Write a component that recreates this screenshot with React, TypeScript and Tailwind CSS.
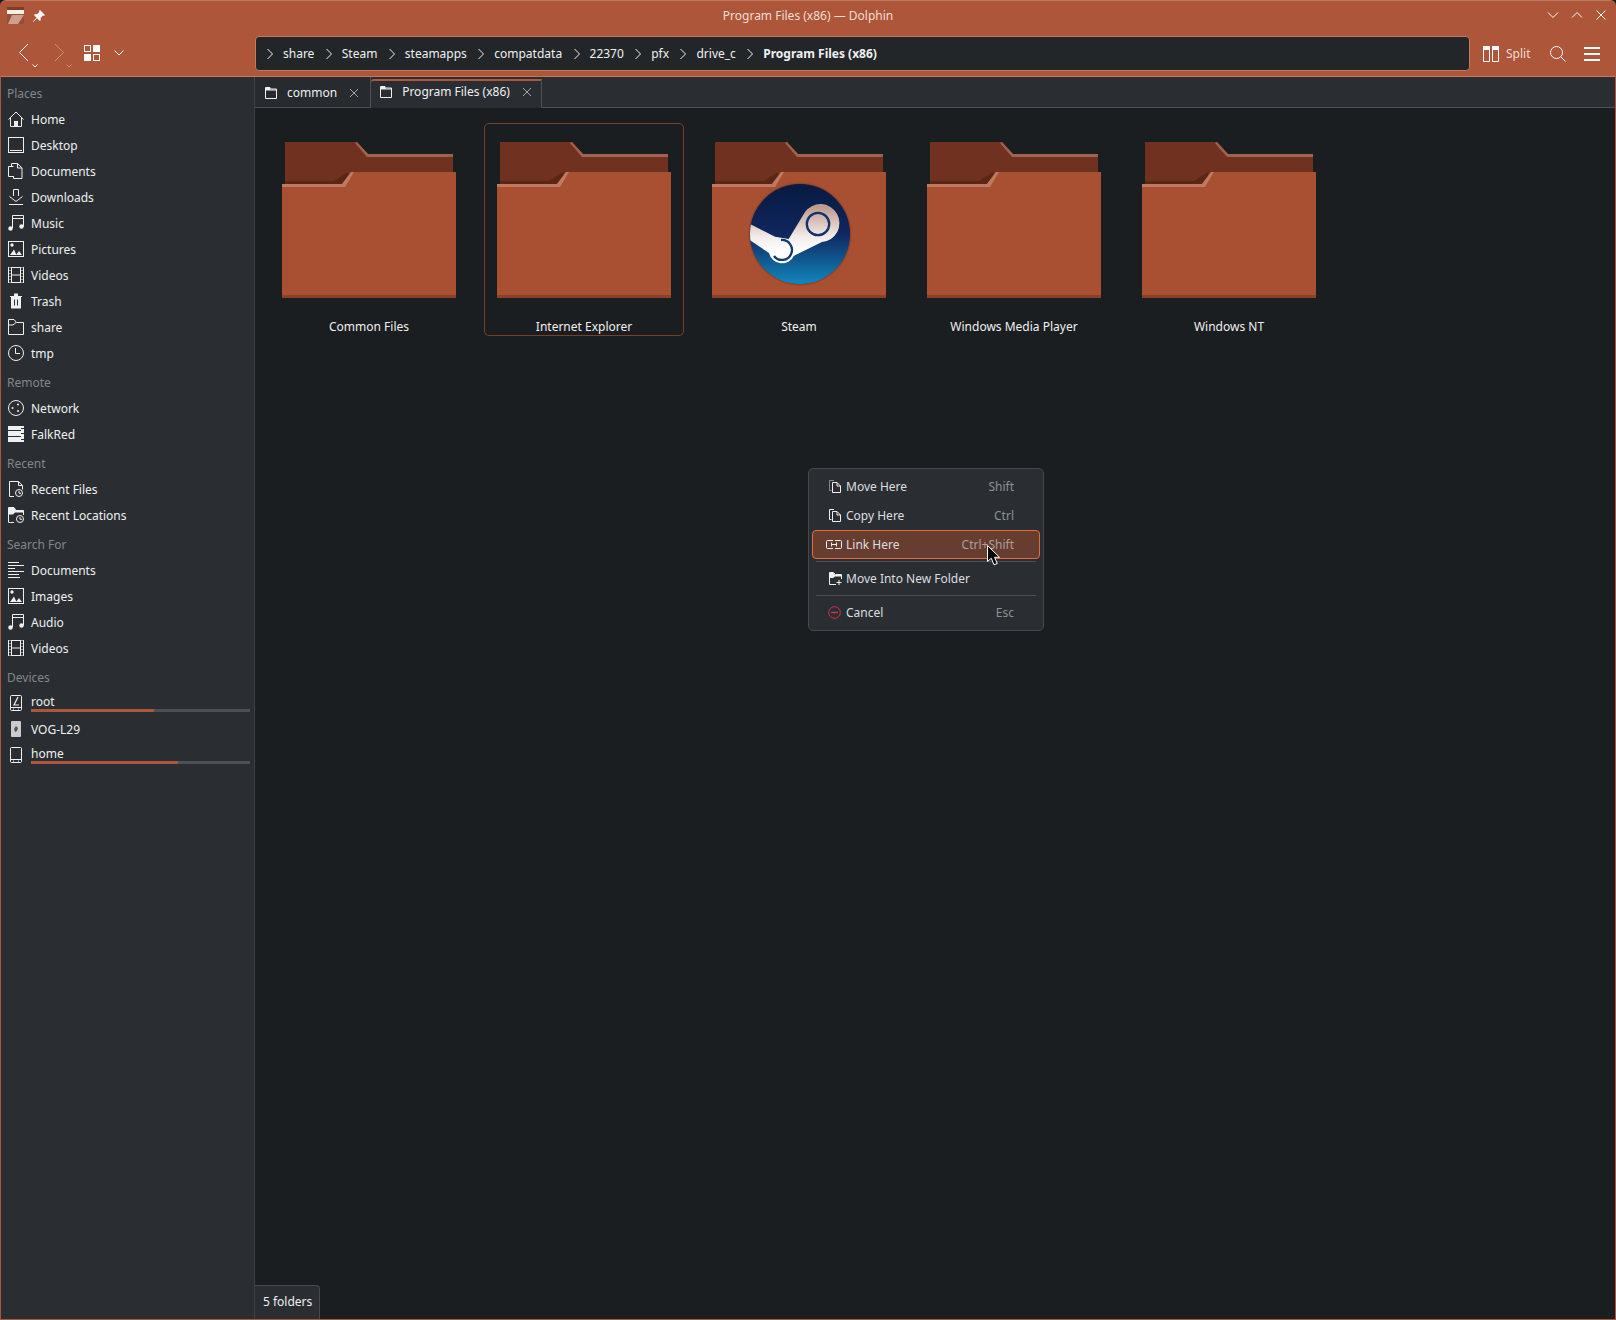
import React from "react";

const Svg = ({ size = 16, className = "", children }: { size?: number; className?: string; children: React.ReactNode }) => (
  <svg width={size} height={size} viewBox="0 0 16 16" fill="none" stroke="currentColor" strokeWidth="1" className={`shrink-0 ${className}`}>
    {children}
  </svg>
);

const HomeIcon = () => (
  <Svg>
    <path d="M0.5 8.5L8 1L15.5 8.5M2.5 7V15.5H13.5V7" />
    <rect x="6.5" y="10.5" width="3" height="5" fill="currentColor" />
  </Svg>
);
const DesktopIcon = () => (
  <Svg>
    <rect x="0.5" y="0.5" width="15" height="15" />
    <path d="M2 13.5H14" />
  </Svg>
);
const DocumentsIcon = () => (
  <Svg>
    <path d="M5.5 3.5H0.5V13.5H5.5" />
    <path d="M3.5 0.5H9.5L14 5V15.5H5.5V13M3.5 0.5V3.5M9.5 0.5V5H14" />
  </Svg>
);
const DownloadsIcon = () => (
  <Svg>
    <path d="M5.5 7V0.5H10.5V7M1.5 7.5L8 12.5L14.5 7.5M1 15.5H15" />
  </Svg>
);
const MusicIcon = () => (
  <Svg>
    <path d="M4.5 13V0.5H15.5V11.5M4.5 3.5H15.5" />
    <circle cx="2.5" cy="13.5" r="2.2" fill="currentColor" stroke="none" />
    <circle cx="13.5" cy="11.5" r="2.2" fill="currentColor" stroke="none" />
  </Svg>
);
const PicturesIcon = () => (
  <Svg>
    <rect x="0.5" y="0.5" width="15" height="15" />
    <circle cx="4" cy="4" r="1.7" fill="currentColor" stroke="none" />
    <path d="M2 14L6 8.5L8.5 14ZM8 14L11 10L14 14Z" fill="currentColor" stroke="none" />
  </Svg>
);
const VideosIcon = () => (
  <Svg>
    <rect x="3.5" y="0.5" width="9" height="15" />
    <path d="M3.5 8H12.5M0.5 0V16M15.5 0V16" />
    <path d="M0 0.5H3M0 3.5H3M0 6.5H3M0 9.5H3M0 12.5H3M0 15.5H3M13 0.5H16M13 3.5H16M13 6.5H16M13 9.5H16M13 12.5H16M13 15.5H16" strokeOpacity="0.5" />
  </Svg>
);
const TrashIcon = () => (
  <Svg>
    <path d="M2 3H6V0.5H10V3H14V4H13V15.5H3V4H2Z" fill="currentColor" stroke="none" />
    <path d="M6.5 6.5V12.5M9.5 6.5V12.5" stroke="#2a2e32" />
  </Svg>
);
const FolderIcon = () => (
  <Svg>
    <path d="M0.5 15.5V0.5H6L8.5 3.5H15.5V15.5Z" />
    <path d="M0.5 6L5 6L8 3.5" />
  </Svg>
);
const TabFolderIcon = () => (
  <svg width="12" height="12" viewBox="0 0 12 12" fill="none" stroke="#eff0f1" className="shrink-0">
    <path d="M0.500 11.500V0.500H5L6.500 2H11.500V11.500Z" />
    <path d="M1 1H5L6 2.500H11V3.500H1Z" fill="#eff0f1" stroke="none" />
  </svg>
);
const ClockIcon = () => (
  <Svg>
    <circle cx="8" cy="8" r="7.5" />
    <path d="M7.5 3V8.5H12" />
  </Svg>
);
const NetworkIcon = () => (
  <Svg>
    <circle cx="8" cy="8" r="7.5" />
    <circle cx="4.5" cy="8" r="1" fill="currentColor" stroke="none" />
    <circle cx="10" cy="4.5" r="1" fill="currentColor" stroke="none" />
    <circle cx="10" cy="11" r="1" fill="currentColor" stroke="none" />
  </Svg>
);
const ServerIcon = () => (
  <Svg>
    <rect x="0" y="0" width="16" height="16" fill="currentColor" stroke="none" />
    <path d="M0 4.5H13M0 10.5H13M13 2.5H16M13 7.5H16M13 13.5H16" stroke="#2a2e32" />
  </Svg>
);
const RecentFilesIcon = () => (
  <Svg>
    <path d="M6 15.5H1.5V0.5H10.5L14.5 4.5V8.5M10.5 0.5V4.5H14.5" />
    <circle cx="11" cy="12" r="3.5" fill="#2a2e32" />
    <path d="M11 10V12.3H13" />
  </Svg>
);
const RecentLocationsIcon = () => (
  <Svg>
    <path d="M0.5 15.5V0.5H6L8 3.5H15.5V8M6 15.5H0.5" />
    <path d="M1 1H6L8 3.5H15.5V5.5H7L5 7.5H1Z" fill="currentColor" stroke="none" />
    <circle cx="12" cy="12" r="3.5" fill="#2a2e32" />
    <path d="M12 10V12.3H14" />
  </Svg>
);
const TextIcon = () => (
  <Svg>
    <path d="M0 0.5H11M0 3.5H16M0 6.5H7M0 9.5H16M0 12.5H11M0 15.5H12" />
  </Svg>
);
const DriveIcon = ({ slash = false }: { slash?: boolean }) => (
  <Svg>
    <rect x="2.5" y="0.5" width="11" height="15" rx="1" />
    <path d="M3 12.5H13" />
    {slash && <path d="M10 2L6 10H11" strokeWidth="1.2" />}
    <path d="M5 14H6M10 14H11" />
  </Svg>
);
const PhoneIcon = () => (
  <svg width="16" height="16" viewBox="0 0 16 16" className="shrink-0">
    <rect x="3" y="0" width="10" height="16" rx="1" fill="#c9cbcc" />
    <path d="M8 5L10 7L9 10L7 11L6 8Z" fill="#555" />
  </svg>
);

const SidebarHeader = ({ title }: { title: string }) => (
  <div className="pt-[5px] h-[29px] flex items-center pl-[6px] text-[#81878c]">{title}</div>
);

const SidebarRow = ({ icon, label }: { icon: React.ReactNode; label: string }) => (
  <div className="h-[26px] flex items-center pl-[7px] gap-[7px] text-[#eff0f1]">
    {icon}
    <span className="pt-[2px]">{label}</span>
  </div>
);

const DeviceRow = ({ icon, label, used }: { icon: React.ReactNode; label: string; used: string }) => (
  <div className="h-[26px] flex items-center pl-[7px] gap-[7px] text-[#eff0f1]">
    {icon}
    <div className="flex-1 pr-[4px] mb-[2px]">
      <div className="h-[17px] leading-[17px]">{label}</div>
      <div className="h-[3px] bg-[#4d5054] -mt-[1px]">
        <div className={`h-full bg-[#ad5639] ${used}`} />
      </div>
    </div>
  </div>
);

const SteamBadge = () => (
  <svg width="102" height="102" viewBox="0 0 102 102" className="absolute left-[37px] top-[41px] drop-shadow-[0_0_1px_rgba(0,0,0,0.5)]">
    <defs>
      <linearGradient id="steamBg" x1="0" y1="0" x2="0" y2="1">
        <stop offset="0" stopColor="#071a40" />
        <stop offset="0.5" stopColor="#10265e" />
        <stop offset="1" stopColor="#1088bf" />
      </linearGradient>
      <linearGradient id="steamFg" x1="0" y1="0" x2="0" y2="1">
        <stop offset="0.05" stopColor="#bf9a8e" />
        <stop offset="0.55" stopColor="#f2ecea" />
        <stop offset="0.8" stopColor="#ffffff" />
      </linearGradient>
      <clipPath id="steamClip">
        <circle cx="50" cy="50" r="50" />
      </clipPath>
    </defs>
    <circle cx="51" cy="51" r="50" fill="url(#steamBg)" />
    <g clipPath="url(#steamClip)" transform="translate(1 1)">
      <path
        d="M-2 39L25 52.700L38.700 55L55 28A19 19 0 1 1 72 58L44 71.700A13.300 13.300 0 0 1 19 69L-2 55Z"
        fill="url(#steamFg)"
      />
      <circle cx="68" cy="40" r="11.200" fill="none" stroke="#10306e" strokeWidth="2.300" />
      <path d="M31 56A10 10 0 1 1 24 72" fill="none" stroke="#10396f" strokeWidth="2.300" />
    </g>
  </svg>
);

const FolderBig = () => (
  <svg width="174" height="156" viewBox="0 0 174 156" className="block">
    <path d="M3 0H75L86 12H171V60H3Z" fill="#713120" />
    <path d="M75 0L86 12H171V15H85L73 1Z" fill="#a0624e" />
    <path d="M3 39H52L66 30V42H3Z" fill="#5a2616" />
    <path d="M0 42H60L69 30H174V156H0Z" fill="#a95032" />
    <path d="M0 42H60L69 30H72L63 45H0Z" fill="#c07a62" />
    <rect x="0" y="153" width="174" height="3" fill="#8b4028" />
  </svg>
);

const FileItem = ({ name, selected, steam }: { name: string; selected?: boolean; steam?: boolean }) => (
  <div
    className={`w-[200px] h-[213px] rounded-[5px] border flex flex-col items-center ${
      selected ? "border-[#78402c]" : "border-transparent"
    }`}
  >
    <div className="relative mt-[18px]">
      <FolderBig />
      {steam && <SteamBadge />}
    </div>
    <div className="mt-[19px] text-[#eff0f1] leading-[20px]">{name}</div>
  </div>
);

const Crumb = ({ label, bold }: { label: string; bold?: boolean }) => (
  <div className="flex items-center">
    <svg width="10" height="12" viewBox="0 0 10 12" fill="none" stroke="#eff0f1" className="mr-[8px]">
      <path d="M2.500 1L7.500 6L2.500 11" />
    </svg>
    <span className={`mr-[9.4px] ${bold ? "font-bold" : ""}`}>{label}</span>
  </div>
);

const Tab = ({ label, active }: { label: string; active?: boolean }) => (
  <div
    className={`flex items-center border-r border-r-[#4d5054] ${
      active
        ? "pl-[9px] mt-[2px] h-[29px] pb-[6px] rounded-tl-[3px] border-t-2 border-t-[#ad5639] bg-[#2a2e32]"
        : "h-[31px] pl-[10px] border-b border-b-[#4d5054] bg-[#272a2e] pt-[1px]"
    }`}
  >
    <TabFolderIcon />
    <span className="ml-[10px] text-[#eff0f1]">{label}</span>
    <svg
      width="10"
      height="10"
      viewBox="0 0 10 10"
      stroke="#a3a6a8"
      className={active ? "ml-[12px] mr-[9px]" : "ml-[12px] mr-[11px]"}
    >
      <path d="M1 1L9 9M9 1L1 9" />
    </svg>
  </div>
);

const MenuRow = ({
  icon,
  label,
  shortcut,
  active,
}: {
  icon: React.ReactNode;
  label: string;
  shortcut?: string;
  active?: boolean;
}) => (
  <div
    className={`h-[29px] mx-[3px] flex items-center rounded-[4px] border pl-[14px] pr-[25px] ${
      active ? "bg-[#673d30] border-[#e46c43]" : "border-transparent"
    }`}
  >
    <div className="w-[16px] flex justify-center">{icon}</div>
    <span className="ml-[3px] text-[#dcdee0]">{label}</span>
    <span className={`ml-auto ${active ? "text-[#a99f9b]" : "text-[#8d9195]"}`}>{shortcut}</span>
  </div>
);

const ContextMenu = () => (
  <div className="absolute left-[808px] top-[468px] w-[236px] h-[163px] py-[3px] rounded-[5px] border border-[#45484c] bg-[#2a2e32] text-[#dcdee0]">
    <MenuRow
      label="Move Here"
      shortcut="Shift"
      icon={
        <svg width="12" height="13" viewBox="0 0 12 13" fill="none" stroke="#eff0f1">
          <path d="M2.500 10.500H0.500V0.500H5" strokeOpacity="0.45" />
          <path d="M3.500 2.500H8L11.500 6V12.500H3.500Z" />
          <path d="M8 2.500V6H11.500" />
        </svg>
      }
    />
    <MenuRow
      label="Copy Here"
      shortcut="Ctrl"
      icon={
        <svg width="12" height="13" viewBox="0 0 12 13" fill="none" stroke="#eff0f1">
          <path d="M2.500 10.500H0.500V0.500H5" />
          <path d="M3.500 2.500H8L11.500 6V12.500H3.500Z" />
          <path d="M8 2.500V6H11.500" />
        </svg>
      }
    />
    <MenuRow
      active
      label="Link Here"
      shortcut="Ctrl+Shift"
      icon={
        <svg width="16" height="9" viewBox="0 0 16 9" fill="none" stroke="#eff0f1" className="-ml-[2px]">
          <path d="M7 0.500H1.500A1 1 0 0 0 0.500 1.500V7.500A1 1 0 0 0 1.500 8.500H7M9 0.500H14.500A1 1 0 0 1 15.500 1.500V7.500A1 1 0 0 1 14.500 8.500H9" />
          <path d="M5.500 2.500V6.500M10.500 2.500V6.500M5.500 4.500H10.500" />
        </svg>
      }
    />
    <div className="h-[1px] bg-[#4d5054] mx-[7px] my-[2px]" />
    <MenuRow
      label="Move Into New Folder"
      icon={
        <svg width="13" height="13" viewBox="0 0 13 13" fill="none" stroke="#eff0f1">
          <path d="M7 12.500H0.500V0.500H4.500L6.500 2.500H12.500V7" />
          <path d="M1 1H4.500L6.500 3H12.500V4.500H6L4 6H1Z" fill="#eff0f1" stroke="none" />
          <path d="M10 8V13M7.500 10.500H12.500" />
        </svg>
      }
    />
    <div className="h-[1px] bg-[#4d5054] mx-[7px] my-[2px]" />
    <MenuRow
      label="Cancel"
      shortcut="Esc"
      icon={
        <svg width="13" height="13" viewBox="0 0 13 13" fill="none" stroke="#d0324a" className="-ml-[1px]">
          <circle cx="6.500" cy="6.500" r="5.800" />
          <path d="M3 6.500H10" strokeWidth="1.500" />
        </svg>
      }
    />
  </div>
);

const App = () => {
  return (
    <div className="relative w-[1616px] h-[1320px] bg-[#1b1e20] overflow-hidden font-['Noto_Sans',sans-serif] text-[12px] leading-[18px]">
      <div className="w-full h-full rounded-t-[6px] bg-[#ad5639] border-t border-t-[#bd7a62] flex flex-col px-[1px] pb-[1px]">
        {/* Title bar */}
        <div className="relative h-[35px] shrink-0 flex items-center justify-center pb-[6px] text-[#f3ddd5]">
          <div className="absolute left-[6px] top-[6px] flex items-center gap-[7px]">
            <svg width="17" height="17" viewBox="0 0 17 17" className="shrink-0">
              <rect width="17" height="17" fill="#94503a" />
              <rect width="17" height="3" fill="#7f3d28" />
              <rect y="3" width="17" height="4" fill="#f7eeea" />
              <path d="M5 8H17L11 17H1Z" fill="#cf9e8d" />
            </svg>
            <svg width="14" height="14" viewBox="0 0 14 14" fill="#fcfcfc" className="ml-[1px]">
              <path d="M8 1L13 6L11.800 7L11 6.500L8.500 9L8.800 11L7.800 12L5 9.300L1.500 12.800L1 12.300L4.500 8.800L2 6L3 5L5 5.300L7.500 2.800L7 2Z" />
            </svg>
          </div>
          <span>Program Files (x86) — Dolphin</span>
          <div className="absolute right-[8px] top-[8px] flex items-center gap-[12px] text-[#fcfcfc]">
            <svg width="12" height="12" viewBox="0 0 12 12" fill="none" stroke="currentColor">
              <path d="M1 3.500L6 8.500L11 3.500" />
            </svg>
            <svg width="12" height="12" viewBox="0 0 12 12" fill="none" stroke="currentColor">
              <path d="M1 8.500L6 3.500L11 8.500" />
            </svg>
            <svg width="12" height="12" viewBox="0 0 12 12" fill="none" stroke="currentColor">
              <path d="M1.500 1.500L10.500 10.500M10.500 1.500L1.500 10.500" />
            </svg>
          </div>
        </div>

        {/* Toolbar */}
        <div className="h-[41px] shrink-0 flex items-start border-b border-b-[#c07a62]">
          <div className="relative w-[254px] h-[35px] shrink-0 text-[#fcfcfc]">
            <svg width="12" height="20" viewBox="0 0 12 20" fill="none" stroke="currentColor" className="absolute left-[17px] top-[7px]">
              <path d="M10 1L1.500 9.500L10 18" />
            </svg>
            <svg width="6" height="4" viewBox="0 0 6 4" fill="none" stroke="currentColor" className="absolute left-[31px] top-[28px]">
              <path d="M0.500 0.500L3 3L5.500 0.500" />
            </svg>
            <svg width="12" height="20" viewBox="0 0 12 20" fill="none" stroke="#ce8f79" className="absolute left-[52px] top-[7px]">
              <path d="M2 1L10.500 9.500L2 18" />
            </svg>
            <svg width="6" height="4" viewBox="0 0 6 4" fill="none" stroke="#ce8f79" className="absolute left-[65px] top-[28px]">
              <path d="M0.500 0.500L3 3L5.500 0.500" />
            </svg>
            <svg width="16" height="16" viewBox="0 0 16 16" fill="none" stroke="currentColor" className="absolute left-[83px] top-[9px]">
              <rect x="0.500" y="0.500" width="6" height="6" />
              <rect x="9" y="0" width="7" height="7" fill="currentColor" stroke="none" />
              <rect x="0" y="9" width="7" height="7" fill="currentColor" stroke="none" />
              <rect x="9.500" y="9.500" width="6" height="6" />
            </svg>
            <svg width="10" height="6" viewBox="0 0 10 6" fill="none" stroke="currentColor" className="absolute left-[113px] top-[14px]">
              <path d="M0.500 0.500L5 5L9.500 0.500" />
            </svg>
          </div>
          <div className="w-[1215px] h-[35px] shrink-0 rounded-[4px] border border-[#c07a62] bg-[#232629] flex items-center pl-[9px] text-[#eff0f1]">
            <Crumb label="share" />
            <Crumb label="Steam" />
            <Crumb label="steamapps" />
            <Crumb label="compatdata" />
            <Crumb label="22370" />
            <Crumb label="pfx" />
            <Crumb label="drive_c" />
            <Crumb label="Program Files (x86)" bold />
          </div>
          <div className="flex-1 h-[35px] flex items-center pl-[13px] text-[#f3ddd5]">
            <svg width="16" height="16" viewBox="0 0 16 16" fill="none" stroke="#fcfcfc">
              <path d="M0.500 0.500H6.500V15.500H0.500ZM9.500 0.500H15.500V15.500H9.500Z" />
              <path d="M0 0H7V4H0ZM9 0H16V4H9Z" fill="#fcfcfc" stroke="none" />
            </svg>
            <span className="ml-[7px]">Split</span>
            <svg width="16" height="16" viewBox="0 0 16 16" fill="none" stroke="#fcfcfc" className="ml-[19px]">
              <circle cx="6.500" cy="6.500" r="6" />
              <path d="M11 11L15.500 15.500" />
            </svg>
            <svg width="16" height="14" viewBox="0 0 16 14" fill="#fcfcfc" className="ml-[18px]">
              <rect y="0" width="16" height="2" />
              <rect y="6" width="16" height="2" />
              <rect y="12" width="16" height="2" />
            </svg>
          </div>
        </div>

        {/* Body */}
        <div className="flex-1 min-h-0 flex">
          {/* Sidebar */}
          <div className="w-[254px] shrink-0 bg-[#2a2e32] border-r border-r-[#3d4145]">
            <SidebarHeader title="Places" />
            <SidebarRow icon={<HomeIcon />} label="Home" />
            <SidebarRow icon={<DesktopIcon />} label="Desktop" />
            <SidebarRow icon={<DocumentsIcon />} label="Documents" />
            <SidebarRow icon={<DownloadsIcon />} label="Downloads" />
            <SidebarRow icon={<MusicIcon />} label="Music" />
            <SidebarRow icon={<PicturesIcon />} label="Pictures" />
            <SidebarRow icon={<VideosIcon />} label="Videos" />
            <SidebarRow icon={<TrashIcon />} label="Trash" />
            <SidebarRow icon={<FolderIcon />} label="share" />
            <SidebarRow icon={<ClockIcon />} label="tmp" />
            <SidebarHeader title="Remote" />
            <SidebarRow icon={<NetworkIcon />} label="Network" />
            <SidebarRow icon={<ServerIcon />} label="FalkRed" />
            <SidebarHeader title="Recent" />
            <SidebarRow icon={<RecentFilesIcon />} label="Recent Files" />
            <SidebarRow icon={<RecentLocationsIcon />} label="Recent Locations" />
            <SidebarHeader title="Search For" />
            <SidebarRow icon={<TextIcon />} label="Documents" />
            <SidebarRow icon={<PicturesIcon />} label="Images" />
            <SidebarRow icon={<MusicIcon />} label="Audio" />
            <SidebarRow icon={<VideosIcon />} label="Videos" />
            <SidebarHeader title="Devices" />
            <DeviceRow icon={<DriveIcon slash />} label="root" used="w-[56%]" />
            <SidebarRow icon={<PhoneIcon />} label="VOG-L29" />
            <DeviceRow icon={<DriveIcon />} label="home" used="w-[67%]" />
          </div>

          {/* Main view */}
          <div className="relative flex-1 min-w-0 flex flex-col bg-[#1b1e20]">
            <div className="h-[31px] shrink-0 flex items-start bg-[#2a2e32] border-b border-b-[#4d5054]">
              <Tab label="common" />
              <Tab label="Program Files (x86)" active />
            </div>
            <div className="flex-1 min-h-0 pt-[15px] pl-[14px] flex items-start gap-[15px]">
              <FileItem name="Common Files" />
              <FileItem name="Internet Explorer" selected />
              <FileItem name="Steam" steam />
              <FileItem name="Windows Media Player" />
              <FileItem name="Windows NT" />
            </div>
            <div className="absolute left-0 bottom-0 w-[65px] h-[34px] rounded-tr-[4px] bg-[#2a2e32] border-t border-r border-[#45484c] flex items-center pl-[8px] pb-[1px] text-[#eff0f1]">
              5 folders
            </div>
          </div>
        </div>
      </div>

      <ContextMenu />

      {/* Mouse cursor */}
      <svg width="15" height="21" viewBox="0 0 15 21" className="absolute left-[987px] top-[545px]">
        <path d="M0.500 0.500V16.500L4.300 13.300L7 19.800L10.300 18.500L7.600 12.300H12.500Z" fill="#0a0a0a" stroke="#fff" />
      </svg>
    </div>
  );
};

export default App;
